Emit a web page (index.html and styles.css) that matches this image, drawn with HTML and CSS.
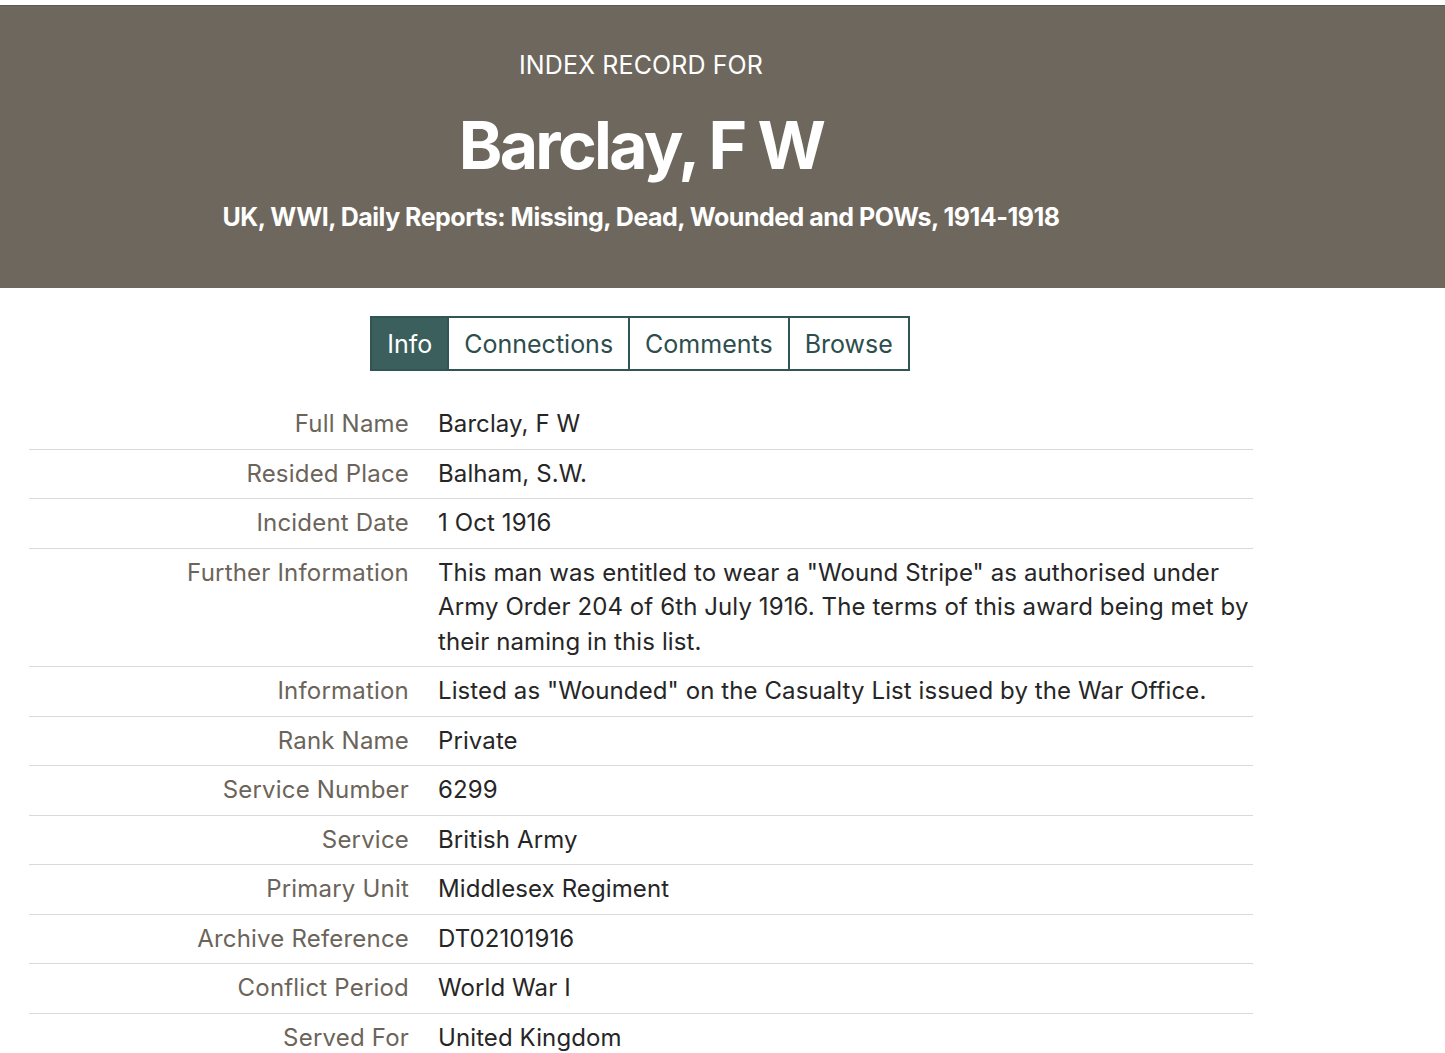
FILE: index.html
```html
<!DOCTYPE html>
<html>
<head>
<meta charset="utf-8">
<link rel="stylesheet" href="styles.css">
</head>
<body>
<div class="topgap"></div>
<header class="hero">
  <div class="wrap hero-inner">
    <div class="eyebrow">INDEX RECORD FOR</div>
    <h1 class="name">Barclay, F W</h1>
    <div class="collection">UK, WWI, Daily Reports: Missing, Dead, Wounded and POWs, 1914-1918</div>
  </div>
</header>
<main class="wrap">
  <nav class="tabs">
    <span class="tab active">Info</span><span class="tab">Connections</span><span class="tab">Comments</span><span class="tab">Browse</span>
  </nav>
  <div class="records">
    <div class="row"><div class="label">Full Name</div><div class="value">Barclay, F W</div></div>
    <div class="row"><div class="label">Resided Place</div><div class="value">Balham, S.W.</div></div>
    <div class="row"><div class="label">Incident Date</div><div class="value">1 Oct 1916</div></div>
    <div class="row"><div class="label">Further Information</div><div class="value">This man was entitled to wear a "Wound Stripe" as authorised under Army Order 204 of 6th July 1916. The terms of this award being met by their naming in this list.</div></div>
    <div class="row"><div class="label">Information</div><div class="value">Listed as "Wounded" on the Casualty List issued by the War Office.</div></div>
    <div class="row"><div class="label">Rank Name</div><div class="value">Private</div></div>
    <div class="row"><div class="label">Service Number</div><div class="value">6299</div></div>
    <div class="row"><div class="label">Service</div><div class="value">British Army</div></div>
    <div class="row"><div class="label">Primary Unit</div><div class="value">Middlesex Regiment</div></div>
    <div class="row"><div class="label">Archive Reference</div><div class="value">DT02101916</div></div>
    <div class="row"><div class="label">Conflict Period</div><div class="value">World War I</div></div>
    <div class="row"><div class="label">Served For</div><div class="value">United Kingdom</div></div>
  </div>
</main>
</body>
</html>
```
FILE: styles.css
```css
html, body {
  margin: 0;
  padding: 0;
  background: #fff;
}
body {
  font-family: Inter, Roboto, "Liberation Sans", sans-serif;
  color: #2b2b2b;
}
.topgap {
  height: 5px;
  background: #fff;
}
.hero {
  background: #6e675d;
  border-top: 1px solid #5e5850;
  height: 282px;
  color: #fff;
}
.wrap {
  width: 1224px;
  margin-left: 29px;
}
.hero-inner {
  text-align: center;
  padding-top: 45px;
}
.eyebrow {
  font-size: 25px;
  line-height: 28px;
  font-weight: 400;
  letter-spacing: 0.1px;
}
.name {
  margin: 26px 0 0;
  font-size: 66px;
  line-height: 80px;
  font-weight: 700;
  letter-spacing: -2.7px;
}
.collection {
  margin-top: 18px;
  font-size: 25px;
  line-height: 28px;
  font-weight: 700;
  letter-spacing: -0.5px;
}
.tabs {
  display: flex;
  justify-content: center;
  margin-top: 28px;
}
.tab {
  display: flex;
  align-items: center;
  height: 51px;
  padding: 0 15px;
  border: 2px solid #2f5654;
  margin-left: -2px;
  font-size: 25px;
  letter-spacing: 0;
  color: #2d4e4d;
  background: #fff;
}
.tab.active {
  background: #3b5f5d;
  color: #fff;
}
.records {
  margin-top: 29px;
}
.row {
  display: flex;
  border-bottom: 1px solid #d9d9d9;
  padding: 7px 0 7px;
  font-size: 24px;
  line-height: 34.5px;
  letter-spacing: 0.1px;
}
.row:last-child {
  border-bottom: none;
}
.label {
  flex: none;
  text-align: right;
  color: #6b645a;
  padding-right: 29px;
  box-sizing: border-box;
  width: 409px;
  letter-spacing: 0.2px;
}
.value {
  flex: 1;
  color: #262626;
}
```
